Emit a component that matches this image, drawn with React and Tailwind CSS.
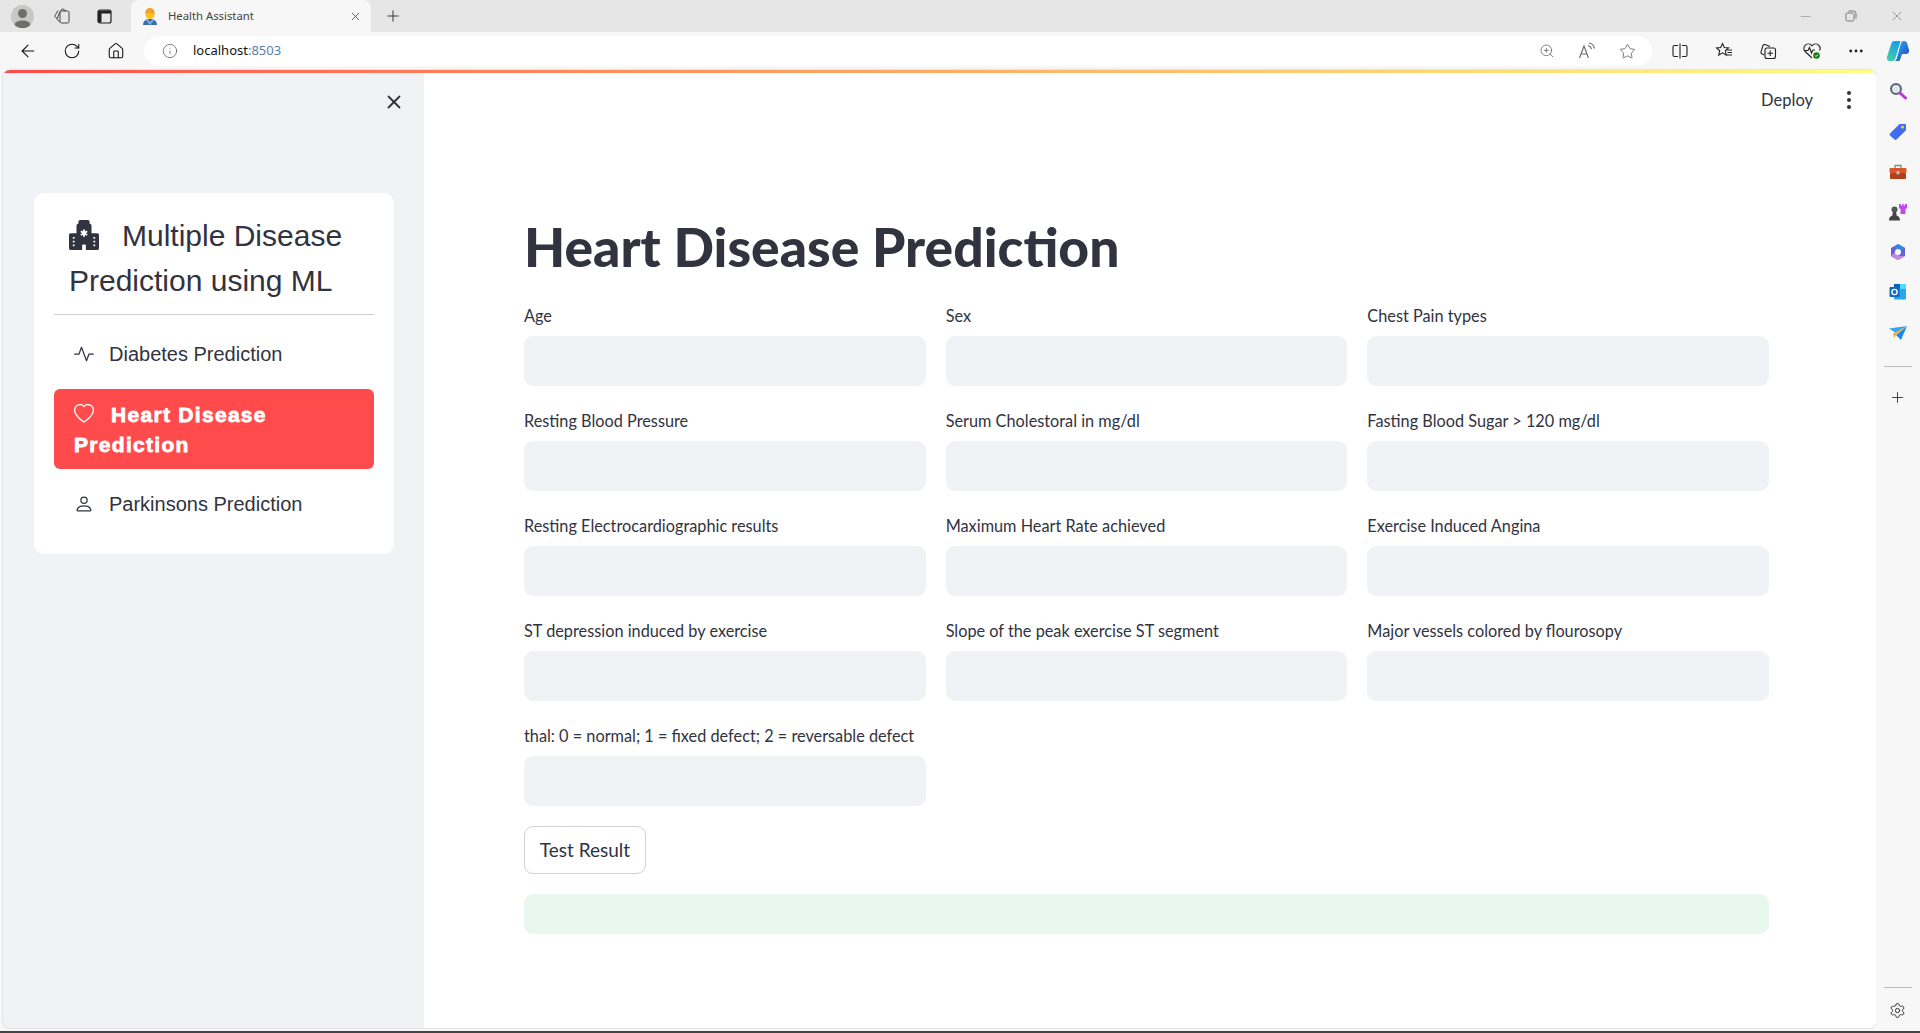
import {
  ArrowLeft,
  Home,
  Info,
  Minus,
  MoreHorizontal,
  Plus,
  RotateCw,
  Settings,
  Star,
  X,
  ZoomIn,
} from "lucide-react";
import { BsActivity, BsHeart, BsHospitalFill, BsPerson } from "react-icons/bs";

const FIELDS = [
  "Age",
  "Sex",
  "Chest Pain types",
  "Resting Blood Pressure",
  "Serum Cholestoral in mg/dl",
  "Fasting Blood Sugar > 120 mg/dl",
  "Resting Electrocardiographic results",
  "Maximum Heart Rate achieved",
  "Exercise Induced Angina",
  "ST depression induced by exercise",
  "Slope of the peak exercise ST segment",
  "Major vessels colored by flourosopy",
  "thal: 0 = normal; 1 = fixed defect; 2 = reversable defect",
];

function TabEmoji() {
  return (
    <svg width="18" height="18" viewBox="0 0 18 18">
      <path d="M2 18c0-4 3-6 7-6s7 2 7 6z" fill="#3b6ea8" />
      <path d="M6 12l3 3 3-3 1 1-4 5-4-5z" fill="#7fb2e5" />
      <circle cx="9" cy="7.5" r="4.6" fill="#fcc21b" />
      <path d="M4.2 6.5C4.4 2.5 6.5 1 9 1s4.600 1.500 4.800 5.500C11.500 6 7 6 4.200 6.500z" fill="#f0a030" />
    </svg>
  );
}

function Collections() {
  return (
    <svg width="18" height="18" viewBox="0 0 18 18" fill="none" stroke="#444" strokeWidth="1">
      <rect x="7" y="4" width="9" height="12" rx="1.500" />
      <path d="M7 14.500l-2-1a1.500 1.500 0 0 1-.7-1.900L7 4.500" />
      <path d="M4.500 11.500l-2-1.200a1.300 1.300 0 0 1-.4-1.800L5 3.500" />
      <path d="M7.500 4l1-1.500a1.200 1.200 0 0 1 1.500-.4L13 4" />
    </svg>
  );
}

function TabStrip() {
  return (
    <svg width="15" height="15" viewBox="0 0 15 15" fill="none">
      <rect x="1" y="1" width="13" height="13" rx="2" stroke="#222" strokeWidth="1.200" />
      <path d="M1 1.500h13V4.500H4.500v9H1z" fill="#222" />
    </svg>
  );
}

function Avatar() {
  return (
    <div className="flex h-[23px] w-[23px] items-end justify-center overflow-hidden rounded-full bg-[#c8c8c6]">
      <svg width="23" height="23" viewBox="0 0 23 23" fill="#6e6e6e">
        <circle cx="11.500" cy="8.500" r="4.500" />
        <ellipse cx="11.500" cy="20" rx="8" ry="4.500" />
      </svg>
    </div>
  );
}

function ReadAloud() {
  return (
    <svg width="18" height="18" viewBox="0 0 18 18" fill="none" stroke="#666" strokeWidth="1.100">
      <path d="M1.500 16L6 4l4.500 12M3 12h6" />
      <path d="M10 3.500c2 .5 3 1.500 3.500 3.500M11 1c3 .5 5 2.500 5.500 5.500" />
    </svg>
  );
}

function SplitScreen() {
  return (
    <svg width="16" height="16" viewBox="0 0 16 16" fill="none" stroke="#222" strokeWidth="1.100">
      <path d="M6 2.500H2.500a1.500 1.500 0 0 0-1.500 1.500v8a1.500 1.500 0 0 0 1.500 1.500H6M10 2.500h3.500A1.500 1.500 0 0 1 15 4v8a1.500 1.500 0 0 1-1.500 1.500H10M8 .5v15" />
    </svg>
  );
}

function Favorites() {
  return (
    <svg width="18" height="18" viewBox="0 0 18 18" fill="none" stroke="#222" strokeWidth="1.100">
      <path d="M7.500 1.500l1.800 4 4.200.4-3.200 2.900 1 4.300-3.800-2.300-3.800 2.300 1-4.300L1.500 5.900l4.200-.4z" />
      <path d="M12 8h5M12.500 10.500h4.500M11.500 13h5.500" />
    </svg>
  );
}

function AddCollection() {
  return (
    <svg width="18" height="18" viewBox="0 0 18 18" fill="none" stroke="#222" strokeWidth="1.100">
      <path d="M5 13l-2.500-1.500a1.200 1.200 0 0 1-.5-1.600L4 3.500c.3-.8 1.200-1.200 2-.9l5 2" />
      <rect x="6" y="6" width="10.500" height="10.500" rx="2" />
      <path d="M11.200 8.500v5.500M8.500 11.200h5.500" />
    </svg>
  );
}

function HealthCheck() {
  return (
    <svg width="20" height="20" viewBox="0 0 20 20" fill="none">
      <path d="M10 17L3.200 10.500a4.300 4.300 0 0 1 0-6.200 4.500 4.500 0 0 1 6.300 0l.5.500.5-.5a4.500 4.500 0 0 1 6.300 0c1.500 1.500 1.700 3.500.7 5.200" stroke="#222" strokeWidth="1.100" />
      <path d="M2 9.500h4l1.500-3 2 5.500 1.500-3h2" stroke="#222" strokeWidth="1.100" />
      <circle cx="14.500" cy="14.500" r="3.300" fill="#107c10" />
      <path d="M13 14.500l1 1 2-2" stroke="#fff" strokeWidth="1" />
    </svg>
  );
}

function Copilot() {
  return (
    <svg width="24" height="24" viewBox="0 0 24 24">
      <defs>
        <linearGradient id="cpA" x1="0" y1="1" x2="0.500" y2="0">
          <stop offset="0" stopColor="#3fd6a0" />
          <stop offset="1" stopColor="#1ea0e8" />
        </linearGradient>
        <linearGradient id="cpB" x1="0" y1="0" x2="1" y2="1">
          <stop offset="0" stopColor="#2fb4f0" />
          <stop offset="1" stopColor="#2340c8" />
        </linearGradient>
      </defs>
      <path d="M8 2h6.500L9.500 19c-.5 1.800-1.800 3-3.500 3H3.500C1.500 22 .3 20 1 18L5.500 4C6 2.800 6.800 2 8 2z" fill="url(#cpA)" />
      <path d="M18 2c1.500 0 2.500.8 3 2l2 7c.6 2-1 4-3 4h-4l-2 6c-.3.700-1 1-1.500 1H8.500c1.200-.4 2-1.500 2.400-3L15 4c.4-1.300 1.500-2 3-2z" fill="url(#cpB)" />
    </svg>
  );
}

const SIDE_ICONS = [
  <svg key="search" width="18" height="18" viewBox="0 0 18 18" fill="none">
    <circle cx="7" cy="7" r="5" fill="#dce6ee" stroke="#5c6670" strokeWidth="2" />
    <path d="M11 11l5.500 5" stroke="#b83ad6" strokeWidth="3" strokeLinecap="round" />
  </svg>,
  <svg key="tag" width="18" height="18" viewBox="0 0 18 18">
    <path d="M1 11.500L10 2.500c.5-.5 1-.5 1.500-.5H16c.6 0 1 .4 1 1v4.500c0 .5-.2 1-.5 1.300L7.500 17.500c-.6.600-1.400.600-2 0L1 13.500c-.6-.6-.6-1.400 0-2z" fill="#3f6ff0" />
    <circle cx="13.500" cy="5" r="1.600" fill="#f5c73d" />
  </svg>,
  <svg key="toolbox" width="18" height="18" viewBox="0 0 18 18">
    <path d="M6 5V2.500h6V5" fill="none" stroke="#8a8a8a" strokeWidth="1.300" />
    <rect x="0.500" y="5" width="17" height="5" rx="1" fill="#d9582b" />
    <rect x="1" y="10" width="16" height="6" rx="1" fill="#b33e1a" />
    <rect x="7.500" y="8" width="3" height="3.500" fill="#b9b9b9" />
  </svg>,
  <svg key="chess" width="18" height="18" viewBox="0 0 18 18">
    <path d="M10 1h1.800v1.500h1.400V1h1.400v1.500h1.400V1H18v4.500h-1.500v5.500H11.500V5.500H10z" fill="#c04ae8" />
    <circle cx="5.500" cy="6.500" r="3" fill="#555" />
    <path d="M4 9h3l1 4.500H3zM0 17.500c0-2.500 1-4 2.500-4.500h6c1.500.5 2.500 2 2.500 4.500z" fill="#444" />
  </svg>,
  <svg key="m365" width="18" height="18" viewBox="0 0 18 18" fill="none">
    <path d="M9 1l7 4v8l-7 4-7-4V5z" fill="#6a5fd8" />
    <path d="M9 1l7 4-5 3.500L5.500 5z" fill="#2d8ae0" />
    <path d="M2 13l4-4 5 4 5 0-7 4z" fill="#c08ae0" />
    <circle cx="9" cy="9" r="3" fill="#f7f7f7" />
  </svg>,
  <svg key="outlook" width="18" height="18" viewBox="0 0 18 18">
    <rect x="5" y="1" width="12" height="15.500" rx="1" fill="#28a8ea" />
    <path d="M5 1h6v5H5z" fill="#0364b8" />
    <path d="M11 1h6v5h-6z" fill="#50d9ff" />
    <rect x="0.500" y="4" width="10" height="10" rx="1" fill="#0f6cbd" />
    <circle cx="5.500" cy="9" r="2.600" fill="none" stroke="#fff" strokeWidth="1.400" />
  </svg>,
  <svg key="send" width="18" height="18" viewBox="0 0 18 18">
    <path d="M0 4.500L18 2 7 9z" fill="#35a7f0" />
    <path d="M18 2L12 16 7 11z" fill="#1e88e5" />
    <path d="M18 2L4 9.500 5 14l2.500-4z" fill="#f2a93b" />
  </svg>,
];

function ToolButton({ children }) {
  return <div className="flex h-[30px] w-[40px] shrink-0 items-center justify-center">{children}</div>;
}

function BarButton({ children }) {
  return <div className="flex h-[30px] w-[44px] shrink-0 items-center justify-center">{children}</div>;
}

function BrowserChrome() {
  return (
    <div className="shrink-0" style={{ fontFamily: "'Noto Sans', sans-serif" }}>
      <div className="flex h-[32px] items-center bg-[#e6e6e6] pl-[11px]">
        <Avatar />
        <div className="ml-[7px] flex w-[42px] justify-center"><Collections /></div>
        <div className="flex w-[42px] justify-center"><TabStrip /></div>
        <div className="ml-[6px] flex h-full w-[240px] items-center rounded-t-[8px] bg-[#f7f7f7] pl-[10px] pr-[9px]">
          <TabEmoji />
          <span className="ml-[9px] flex-1 text-[11.300px] text-[#444]">Health Assistant</span>
          <X size={13} strokeWidth={1.500} color="#444" />
        </div>
        <div className="ml-[13px]"><Plus size={18} strokeWidth={1.300} color="#333" /></div>
        <div className="ml-auto flex items-center">
          <div className="flex w-[46px] justify-center"><Minus size={15} strokeWidth={1} color="#888" /></div>
          <div className="flex w-[46px] justify-center">
            <svg width="12" height="12" viewBox="0 0 12 12" fill="none" stroke="#777">
              <rect x="1" y="3" width="8" height="8" rx="1.500" />
              <path d="M3.500 1h5a2.500 2.500 0 0 1 2.500 2.500v5" />
            </svg>
          </div>
          <div className="flex w-[46px] justify-center"><X size={16} strokeWidth={1} color="#777" /></div>
        </div>
      </div>
      <div className="flex h-[38px] items-center overflow-hidden bg-[#f7f7f7] pl-[6px]">
        <BarButton><ArrowLeft size={20} strokeWidth={1.300} color="#111" /></BarButton>
        <BarButton><RotateCw size={18} strokeWidth={1.400} color="#111" /></BarButton>
        <BarButton><Home size={18} strokeWidth={1.400} color="#111" /></BarButton>
        <div className="ml-[6px] flex h-[30px] w-[1508px] shrink-0 items-center rounded-full bg-white pl-[18px] pr-[5px]">
          <Info size={16} strokeWidth={1.100} color="#555" />
          <span className="ml-[15px] flex-1 text-[13px] text-[#111]">
            localhost<span className="text-[#5b7ea6]">:8503</span>
          </span>
          <ToolButton><ZoomIn size={16} strokeWidth={1.100} color="#555" /></ToolButton>
          <ToolButton><ReadAloud /></ToolButton>
          <ToolButton><Star size={17} strokeWidth={1.100} color="#555" /></ToolButton>
        </div>
        <div className="ml-[6px] flex shrink-0">
          <BarButton><SplitScreen /></BarButton>
          <BarButton><Favorites /></BarButton>
          <BarButton><AddCollection /></BarButton>
          <BarButton><HealthCheck /></BarButton>
          <BarButton><MoreHorizontal size={18} strokeWidth={1.800} color="#222" /></BarButton>
          <div className="-ml-[2px]"><BarButton><Copilot /></BarButton></div>
        </div>
      </div>
    </div>
  );
}

function SideBar() {
  return (
    <aside
      className="flex w-[421px] shrink-0 flex-col bg-[#f0f2f6] pl-[31px]"
      style={{ fontFamily: "'Liberation Sans', Arial, sans-serif" }}
    >
      <div className="flex h-[50px] w-[371px] items-center justify-end pt-[7px]">
        <X size={22} strokeWidth={2} color="#31333f" />
      </div>
      <div className="mt-[70px] h-[361px] w-[360px] rounded-[10px] bg-white px-[20px] pt-[20px] text-[#31333f]">
        <h2 className="pl-[15px] text-[30px] leading-[45px] font-normal">
          <BsHospitalFill className="mr-[23px] inline-block align-[-4px]" size={30} />
          Multiple Disease Prediction using ML
        </h2>
        <hr className="mt-[11px] border-t border-[#cfcfcf]" />
        <div className="mt-[18px] flex h-[41px] items-center px-[20px] text-[20px]">
          <BsActivity size={20} className="mr-[16px]" />
          <span className="-ml-[1px]">Diabetes Prediction</span>
        </div>
        <div className="mt-[15px] h-[80px] rounded-[6px] bg-[#ff4b4b] px-[20px] pt-[11px] text-[21px] leading-[30px] font-bold tracking-[1.300px] text-white [-webkit-text-stroke:0.800px_white]">
          <BsHeart size={20} className="mr-[17px] inline-block align-[-2px]" />
          Heart Disease
          <br />
          Prediction
        </div>
        <div className="mt-[14px] flex h-[41px] items-center px-[20px] text-[20px]">
          <BsPerson size={20} className="mr-[16px]" />
          <span className="-ml-[1px]">Parkinsons Prediction</span>
        </div>
      </div>
    </aside>
  );
}

function Field({ label }) {
  return (
    <div>
      <div className="mb-[8px] h-[24px] whitespace-nowrap text-[16.300px] leading-[24px] text-[#31333f]">{label}</div>
      <div className="h-[50px] rounded-[9px] bg-[#f0f2f6]" />
    </div>
  );
}

function MainArea() {
  return (
    <main className="min-w-0 flex-1 bg-white text-[#31333f]" style={{ fontFamily: "Lato, sans-serif" }}>
      <div className="flex h-[50px] items-center justify-end pr-[25px] pt-[4px]">
        <span className="mr-[34px] text-[16.500px]">Deploy</span>
        <div className="flex flex-col gap-[3px]">
          <span className="h-[4px] w-[4px] rounded-full bg-[#31333f]" />
          <span className="h-[4px] w-[4px] rounded-full bg-[#31333f]" />
          <span className="h-[4px] w-[4px] rounded-full bg-[#31333f]" />
        </div>
      </div>
      <div className="ml-[100px] w-[1245px]">
        <h1 className="mt-[65px] h-[116px] text-[53.400px] leading-[116px] font-black">Heart Disease Prediction</h1>
        <div className="grid grid-cols-3 gap-x-[20px] gap-y-[23px]">
          {FIELDS.map((f) => (
            <Field key={f} label={f} />
          ))}
        </div>
        <button className="mt-[20px] h-[48px] w-[122px] rounded-[9px] border border-[#d0d1d4] bg-white text-[19px]">
          Test Result
        </button>
        <div className="mt-[20px] h-[40px] rounded-[9px] bg-[#e8f8ee]" />
      </div>
    </main>
  );
}

function RightRail() {
  return (
    <div className="flex w-[44px] shrink-0 flex-col items-center bg-[#f7f7f7] pb-[12px] pr-[1px] pt-[12px]">
      <div className="flex flex-col gap-[22.300px]">{SIDE_ICONS}</div>
      <div className="mt-[24px] h-px w-[28px] bg-[#bdbdbd]" />
      <div className="mt-[22px]"><Plus size={17} strokeWidth={1.200} color="#222" /></div>
      <div className="mt-auto h-px w-[28px] bg-[#bdbdbd]" />
      <div className="mt-[14px]"><Settings size={17} strokeWidth={1.300} color="#222" /></div>
    </div>
  );
}

export default function App() {
  return (
    <div className="flex h-[1033px] w-[1920px] flex-col overflow-hidden bg-[#f7f7f7]">
      <BrowserChrome />
      <div className="flex min-h-0 flex-1">
        <div className="mb-[3px] ml-[3px] flex min-w-0 flex-1 flex-col overflow-hidden rounded-[7px] shadow-[0_0_2px_rgba(0,0,0,0.25)]">
          <div className="h-[3px] shrink-0 bg-gradient-to-r from-[#ff4b4b] to-[#fffd80]" />
          <div className="flex min-h-0 flex-1">
            <SideBar />
            <MainArea />
          </div>
        </div>
        <RightRail />
      </div>
      <div className="h-[2px] shrink-0 bg-[#444]" />
    </div>
  );
}
